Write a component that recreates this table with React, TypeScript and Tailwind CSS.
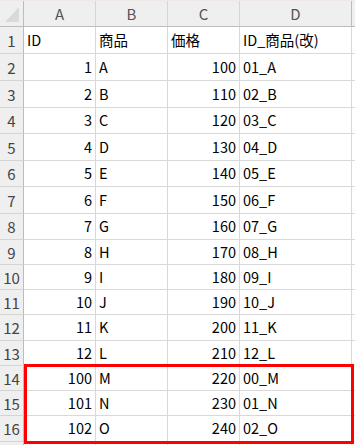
import React from 'react';

type Row = { id: number; name: string; price: number; code: string };

const rows: Row[] = [
  { id: 1, name: 'A', price: 100, code: '01_A' },
  { id: 2, name: 'B', price: 110, code: '02_B' },
  { id: 3, name: 'C', price: 120, code: '03_C' },
  { id: 4, name: 'D', price: 130, code: '04_D' },
  { id: 5, name: 'E', price: 140, code: '05_E' },
  { id: 6, name: 'F', price: 150, code: '06_F' },
  { id: 7, name: 'G', price: 160, code: '07_G' },
  { id: 8, name: 'H', price: 170, code: '08_H' },
  { id: 9, name: 'I', price: 180, code: '09_I' },
  { id: 10, name: 'J', price: 190, code: '10_J' },
  { id: 11, name: 'K', price: 200, code: '11_K' },
  { id: 12, name: 'L', price: 210, code: '12_L' },
  { id: 100, name: 'M', price: 220, code: '00_M' },
  { id: 101, name: 'N', price: 230, code: '01_N' },
  { id: 102, name: 'O', price: 240, code: '02_O' },
];

// row heights (incl. bottom grid line), row 1 is the header text row
const heights = [
  'h-[27px]', 'h-[27px]', 'h-[27px]', 'h-[26px]', 'h-[27px]', 'h-[26px]', 'h-[27px]', 'h-[26px]',
  'h-[25px]', 'h-[25px]', 'h-[25px]', 'h-[26px]', 'h-[25px]', 'h-[25px]', 'h-[25px]', 'h-[26px]',
];

const RowHead = ({ n }: { n: number | string }) => (
  <div className="w-[24px] shrink-0 h-full flex items-center justify-center bg-[#efefef] border-r border-r-[#bcbcbc] border-b border-b-[#d4d4d4] text-[#444] text-[15px]">
    {n}
  </div>
);

const Cell = ({ children, w, right }: { children?: React.ReactNode; w: string; right?: boolean }) => (
  <div
    className={`${w} shrink-0 h-full flex items-center border-r border-b border-[#d9d9d9] px-[3px] ${
      right ? 'justify-end' : 'justify-start'
    }`}
  >
    {children}
  </div>
);

export default function App() {
  const body: { cells: (string | number)[]; right: boolean[] }[] = [
    { cells: ['ID', '商品', '価格', 'ID_商品(改)'], right: [false, false, false, false] },
    ...rows.map((r) => ({
      cells: [r.id, r.name, r.price, r.code],
      right: [true, false, true, false],
    })),
  ];

  return (
    <div
      className="relative w-[355px] h-[445px] overflow-hidden bg-white text-[14.5px] leading-none text-black"
      style={{ fontFamily: '"Noto Sans CJK JP", "Noto Sans", sans-serif' }}
    >
      {/* column headers */}
      <div className="flex h-[27px] bg-[#efefef] border-t border-t-[#efe6e6] border-b border-b-[#bcbcbc] text-[#555] text-[15px]">
        <div className="w-[24px] shrink-0 h-full border-r border-r-[#bcbcbc] flex items-end justify-end pb-[4px] pr-[4px]">
          <svg width="14" height="15" viewBox="0 0 14 15">
            <polygon points="14,0 14,15 0,15" fill="#dadada" />
          </svg>
        </div>
        {['A', 'B', 'C'].map((c) => (
          <div key={c} className="w-[72px] shrink-0 h-full flex items-center justify-center border-r border-r-[#d4d4d4]">
            {c}
          </div>
        ))}
        <div className="w-[112px] shrink-0 h-full flex items-center justify-center border-r border-r-[#bcbcbc]">D</div>
        <div className="flex-1" />
      </div>

      {/* rows */}
      {body.map((r, i) => (
        <div key={i} className={`flex ${heights[i]}`}>
          <RowHead n={i + 1} />
          <Cell w="w-[72px]" right={r.right[0]}>{r.cells[0]}</Cell>
          <Cell w="w-[72px]" right={r.right[1]}>{r.cells[1]}</Cell>
          <Cell w="w-[72px]" right={r.right[2]}>{r.cells[2]}</Cell>
          <Cell w="w-[112px]" right={r.right[3]}>{r.cells[3]}</Cell>
          <div className="flex-1 h-full border-b border-[#d9d9d9]" />
        </div>
      ))}
      <div className="flex h-[10px]">
        <div className="w-[24px] shrink-0 h-full bg-[#efefef] border-r border-r-[#bcbcbc]" />
        <div className="w-[72px] shrink-0 h-full border-r border-[#d9d9d9]" />
        <div className="w-[72px] shrink-0 h-full border-r border-[#d9d9d9]" />
        <div className="w-[72px] shrink-0 h-full border-r border-[#d9d9d9]" />
        <div className="w-[112px] shrink-0 h-full border-r border-[#d9d9d9]" />
      </div>

      {/* highlight */}
      <div className="absolute left-[24px] top-[364px] w-[330px] h-[80px] border-[3px] border-[#ff0000] pointer-events-none" />
    </div>
  );
}
